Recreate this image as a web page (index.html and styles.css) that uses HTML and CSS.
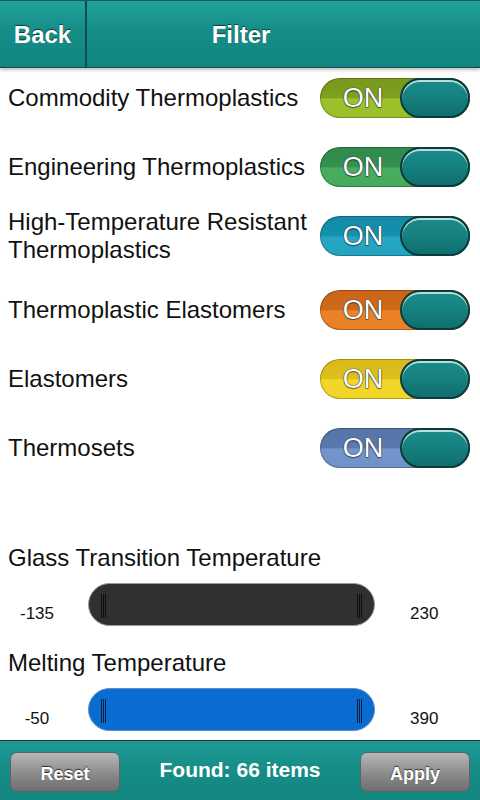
FILE: index.html
```html
<!DOCTYPE html>
<html>
<head>
    <title>Filter</title>
    <link rel="stylesheet" href="styles.css">
</head>
<body>
    <div class="header">
        <div class="back">Back</div>
        <div class="title">Filter</div>
    </div>

    <div class="main">
        <div class="list">
            <div class="row">
                <span class="label">Commodity Thermoplastics</span>
                <div class="toggle olive"><span class="on">ON</span><span class="knob"></span></div>
            </div>
            <div class="row">
                <span class="label">Engineering Thermoplastics</span>
                <div class="toggle green"><span class="on">ON</span><span class="knob"></span></div>
            </div>
            <div class="row tall">
                <span class="label">High-Temperature Resistant Thermoplastics</span>
                <div class="toggle cyan"><span class="on">ON</span><span class="knob"></span></div>
            </div>
            <div class="row">
                <span class="label">Thermoplastic Elastomers</span>
                <div class="toggle orange"><span class="on">ON</span><span class="knob"></span></div>
            </div>
            <div class="row">
                <span class="label">Elastomers</span>
                <div class="toggle yellow"><span class="on">ON</span><span class="knob"></span></div>
            </div>
            <div class="row">
                <span class="label">Thermosets</span>
                <div class="toggle slate"><span class="on">ON</span><span class="knob"></span></div>
            </div>
        </div>

        <div class="ranges">
            <div class="range-title">Glass Transition Temperature</div>
            <div class="range">
                <span class="min">-135</span>
                <div class="bar dark"><span class="grip"></span><span class="grip"></span></div>
                <span class="max">230</span>
            </div>

            <div class="range-title">Melting Temperature</div>
            <div class="range">
                <span class="min">-50</span>
                <div class="bar blue"><span class="grip"></span><span class="grip"></span></div>
                <span class="max">390</span>
            </div>
        </div>
    </div>

    <div class="footer">
        <button class="btn">Reset</button>
        <span class="found">Found: 66 items</span>
        <button class="btn">Apply</button>
    </div>
</body>
</html>
```

FILE: styles.css
```css
body {
    margin: 0;
    width: 480px;
    height: 800px;
    display: flex;
    flex-direction: column;
    font-family: 'Liberation Sans', Arial, sans-serif;
    background-color: #fff;
    color: #111;
    overflow: hidden;
}

/* top bar */
.header {
    flex-shrink: 0;
    height: 66px;
    display: flex;
    background: linear-gradient(to bottom, #21a29b 0%, #168d87 45%, #118680 100%);
    border-top: 1px solid #0e5f5b;
    border-bottom: 1px solid #0b4f4c;
    box-shadow: 0 2px 3px rgba(0, 0, 0, 0.25);
    color: #fff;
    font-weight: bold;
    font-size: 24px;
    text-shadow: 0 -1px 1px rgba(0, 0, 0, 0.6);
}

.back {
    width: 85px;
    border-right: 2px solid #0c4f4b;
    display: flex;
    align-items: center;
    justify-content: center;
    padding-top: 2px;
}

.title {
    flex: 1;
    display: flex;
    align-items: center;
    justify-content: center;
    padding-right: 85px;
    padding-top: 2px;
}

.main {
    flex: 1;
    overflow: hidden;
}

/* switches */
.list {
    display: flex;
    flex-direction: column;
    gap: 9px;
}

.row {
    height: 60px;
    display: flex;
    align-items: center;
    justify-content: space-between;
    padding: 0 10px 0 8px;
}

.row.tall {
    padding-bottom: 5px;
}

.label {
    font-size: 24px;
    line-height: 28px;
    max-width: 305px;
}

.toggle {
    width: 150px;
    height: 40px;
    border-radius: 20px;
    display: flex;
    align-items: center;
    box-sizing: border-box;
    box-shadow: inset 0 0 0 1px rgba(0, 0, 0, 0.25);
}

.on {
    flex: 1;
    text-align: center;
    padding-left: 6px;
    color: #fff;
    font-size: 27px;
    text-shadow: 0 0 1px #234, 0 0 1px #234, 0 1px 1px rgba(0, 0, 0, 0.5);
}

.knob {
    width: 70px;
    height: 40px;
    box-sizing: border-box;
    border-radius: 20px;
    border: 2px solid #0a3c3b;
    background: linear-gradient(to bottom, #1b8c8b 0%, #15807f 50%, #0f6f6d 100%);
    box-shadow: inset 0 2px 0 rgba(255, 255, 255, 0.7);
}

.olive { background: linear-gradient(to bottom, #78991c 0%, #7ea11f 50%, #9bc22b 52%, #98c029 100%); }
.green { background: linear-gradient(to bottom, #2f8a4c 0%, #35914f 50%, #47ad5f 52%, #45aa5d 100%); }
.cyan { background: linear-gradient(to bottom, #138aa6 0%, #1591ae 50%, #26a6c4 52%, #23a3c0 100%); }
.orange { background: linear-gradient(to bottom, #c96418 0%, #d06a1a 50%, #ec8228 52%, #e97f26 100%); }
.yellow { background: linear-gradient(to bottom, #d9b91a 0%, #dec01c 50%, #f3d82a 52%, #f0d428 100%); }
.slate { background: linear-gradient(to bottom, #5674a8 0%, #5a79ae 50%, #7495cc 52%, #7192c8 100%); }

/* ranges */
.ranges {
    margin-top: 66px;
}

.range-title {
    font-size: 24px;
    line-height: 28px;
    padding-left: 8px;
}

.range {
    display: flex;
    align-items: flex-end;
    margin-top: 11px;
    margin-bottom: 23px;
}

.range:last-child {
    margin-bottom: 0;
}

.min, .max {
    font-size: 17px;
    line-height: 20px;
    padding-bottom: 2px;
}

.min {
    width: 88px;
    text-align: center;
    box-sizing: border-box;
    padding-right: 14px;
}

.max {
    flex: 1;
    text-align: left;
    padding-left: 35px;
}

.bar {
    width: 287px;
    height: 43px;
    border-radius: 22px;
    box-sizing: border-box;
    display: flex;
    align-items: center;
    justify-content: space-between;
    padding: 0 12px 0 12px;
}

.bar.dark {
    background-color: #303030;
    border: 1px solid #9a9a9a;
}

.bar.blue {
    background-color: #0a6bd0;
    border: 1px solid #5b8ec9;
}

.grip {
    width: 5px;
    height: 24px;
    margin-top: 2px;
    background: repeating-linear-gradient(to right, rgba(0, 0, 0, 0.7) 0, rgba(0, 0, 0, 0.7) 1px, transparent 1px, transparent 2px);
}

/* bottom bar */
.footer {
    flex-shrink: 0;
    height: 59px;
    display: flex;
    align-items: center;
    justify-content: space-between;
    padding: 0 10px;
    background: linear-gradient(to bottom, #1e9a94 0%, #168d87 50%, #12857f 100%);
    border-top: 1px solid #234;
}

.btn {
    width: 110px;
    height: 40px;
    margin-top: 2px;
    border: 1px solid #5c6666;
    border-radius: 7px;
    background: linear-gradient(to bottom, #b8b8b8 0%, #8e8e8e 50%, #6e6e6e 100%);
    color: #fff;
    font-family: 'Liberation Sans', Arial, sans-serif;
    font-weight: bold;
    font-size: 18px;
    padding-top: 6px;
    text-shadow: 0 -1px 1px rgba(0, 0, 0, 0.7);
}

.found {
    color: #fff;
    font-weight: bold;
    font-size: 21px;
    margin-top: -2px;
}
```
